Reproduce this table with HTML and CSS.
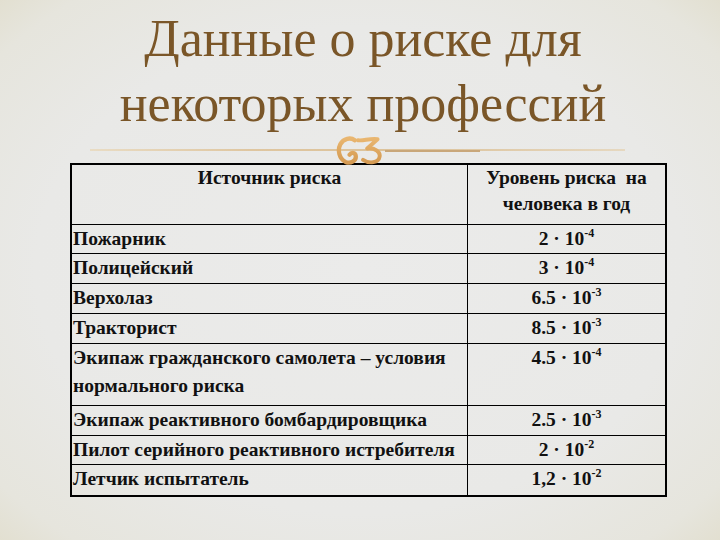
FILE: index.html
```html
<!DOCTYPE html>
<html lang="ru">
<head>
<meta charset="utf-8">
<link rel="stylesheet" href="styles.css">
</head>
<body>
<div class="slide">
  <h1 class="title">Данные о риске для<br>некоторых профессий</h1>
  <div class="divider">
    <span class="divider-dark"></span>
    <svg class="ornament" viewBox="0 0 50 30" width="52" height="31" aria-hidden="true">
      <defs>
        <linearGradient id="gold" x1="0" y1="0" x2="0" y2="1">
          <stop offset="0" stop-color="#e9b670"/>
          <stop offset="1" stop-color="#d49a52"/>
        </linearGradient>
      </defs>
      <path d="M19 6 C15 3 8 4 5 10 C2 16 4 24 10 27 C15 29 20 26 20 22 C20 18 16 17 14 20" fill="none" stroke="url(#gold)" stroke-width="4.2" stroke-linecap="round"/>
      <path d="M22 6 C27 7 33 4 41 5 L31 14 C38 13 44 17 43 22 C42 28 33 29 27 25" fill="none" stroke="url(#gold)" stroke-width="3.8" stroke-linecap="round" stroke-linejoin="round"/>
    </svg>
  </div>
  <table class="risk">
    <thead>
      <tr>
        <th class="src-head">Источник риска</th>
        <th class="val-head">Уровень риска&nbsp; на<br>человека в год</th>
      </tr>
    </thead>
    <tbody>
      <tr class="short"><td class="src">Пожарник</td><td class="val">2 · 10<sup>-4</sup></td></tr>
      <tr><td class="src">Полицейский</td><td class="val">3 · 10<sup>-4</sup></td></tr>
      <tr><td class="src">Верхолаз</td><td class="val">6.5 · 10<sup>-3</sup></td></tr>
      <tr><td class="src">Тракторист</td><td class="val">8.5 · 10<sup>-3</sup></td></tr>
      <tr class="tall"><td class="src">Экипаж гражданского самолета – условия нормального риска</td><td class="val">4.5 · 10<sup>-4</sup></td></tr>
      <tr><td class="src">Экипаж реактивного бомбардировщика</td><td class="val">2.5 · 10<sup>-3</sup></td></tr>
      <tr class="short"><td class="src">Пилот серийного реактивного истребителя</td><td class="val">2 · 10<sup>-2</sup></td></tr>
      <tr class="last"><td class="src">Летчик испытатель</td><td class="val">1,2 · 10<sup>-2</sup></td></tr>
    </tbody>
  </table>
</div>
</body>
</html>
```
FILE: styles.css
```css
html, body {
  margin: 0;
  padding: 0;
}
.slide {
  width: 720px;
  height: 540px;
  overflow: hidden;
  background: radial-gradient(ellipse 75% 75% at 50% 50%, #ebebea 0%, #e9e9e7 60%, #e6e5dd 85%, #e0dcc9 100%);
  padding-top: 6px;
  box-sizing: border-box;
}
.title {
  margin: 0;
  font-family: "Liberation Serif", "Times New Roman", serif;
  font-weight: normal;
  font-size: 52px;
  line-height: 65px;
  color: #7a5628;
  text-align: center;
  padding-left: 6px;
}
.divider {
  position: relative;
  margin: 13px 0 0 90px;
  width: 535px;
  height: 2px;
  background: linear-gradient(90deg, #e9dcc4 0%, #dfc6a0 30%, #dcc29a 60%, #e6d8c0 100%);
}
.divider-dark {
  position: absolute;
  left: 295px;
  top: 1px;
  width: 95px;
  height: 2px;
  background: #c9a77a;
}
.ornament {
  position: absolute;
  left: 245px;
  top: -15px;
}
.risk {
  margin: 12px 0 0 70px;
  width: 597px;
  border-collapse: collapse;
  border: 2px solid #000;
  font-family: "Liberation Serif", "Times New Roman", serif;
  font-weight: bold;
  font-size: 19.5px;
  color: #111;
}
.risk th, .risk td {
  border: 1px solid #000;
  vertical-align: top;
  padding: 0 1px;
}
.src-head {
  width: 393px;
  font-weight: bold;
  line-height: 26px;
  height: 59px;
  padding-top: 0;
}
.val-head {
  line-height: 26px;
  padding-top: 2px;
}
.risk td {
  line-height: 28px;
  height: 29px;
}
.short td {
  height: 28px;
}
.src {
  text-align: left;
}
.val {
  text-align: center;
}
.risk sup {
  font-size: 12px;
  line-height: 0;
  vertical-align: 8px;
}
.tall td {
  height: 61px;
}
.last td {
  height: 30px;
}
```
